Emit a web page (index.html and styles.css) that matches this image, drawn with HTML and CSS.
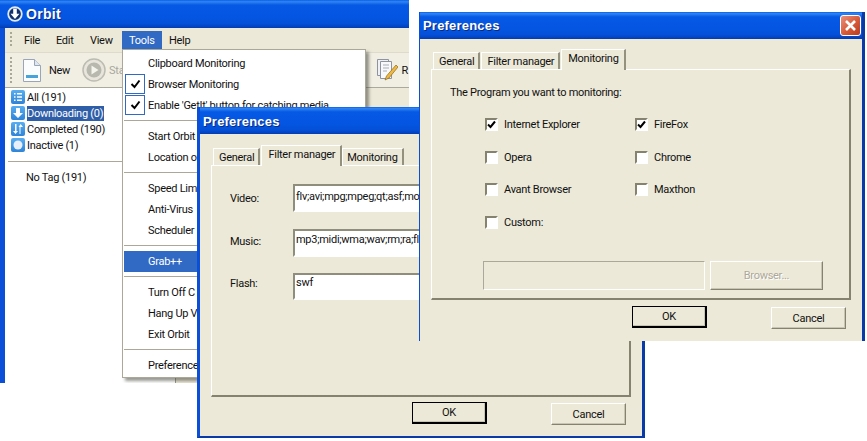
FILE: index.html
```html
<!DOCTYPE html>
<html lang="en">
<head>
<meta charset="utf-8">
<title>Orbit Preferences</title>
<link rel="stylesheet" href="styles.css">
</head>
<body>
<div class="desktop">

  <section class="win main-win">
    <header class="titlebar main-title">
      <svg class="logo" width="16" height="16" viewBox="0 0 16 16"><circle cx="8" cy="8" r="6.800" fill="#12306e" stroke="#dfeaf7" stroke-width="1.800"/><path d="M6.200 2.500h3.600v5.300H12.500L8 13 3.500 7.800h2.700z" fill="#fff"/></svg>
      <span class="title-text">Orbit</span>
    </header>
    <div class="main-body">
      <nav class="menubar">
        <span class="grip"></span>
        <span class="mi mi-file">File</span>
        <span class="mi mi-edit">Edit</span>
        <span class="mi mi-view">View</span>
        <span class="mi mi-active">Tools</span>
        <span class="mi">Help</span>
      </nav>
      <div class="toolbar">
        <span class="grip grip-tall"></span>
        <svg class="tb-new" width="20" height="25" viewBox="0 0 20 25"><path d="M1.500 1.500h11l6 6v16h-17z" fill="#fbfcfe" stroke="#9aa6b8"/><path d="M12.500 1.500v6h6" fill="#dfe6f0" stroke="#9aa6b8"/><rect x="4" y="17" width="12" height="3" fill="#4aa3d8"/></svg>
        <span class="tb-label">New</span>
        <svg class="tb-start" width="24" height="24" viewBox="0 0 24 24"><circle cx="12" cy="12" r="11" fill="#e8e6dc" stroke="#bdbcb2" stroke-width="1.500"/><circle cx="12" cy="12" r="7.500" fill="#b9b8ae"/><path d="M9.500 7.500l7 4.500-7 4.500z" fill="#f4f3ec"/></svg>
        <span class="tb-label tb-off">Start</span>
        <svg class="tb-notes" width="22" height="24" viewBox="0 0 22 24"><path d="M1.500 1.500h11v16h-11z" fill="#eef0f4" stroke="#8d93a0"/><path d="M4.500 3.500h11v17h-11z" fill="#f8f9fb" stroke="#8d93a0"/><path d="M7 7h6M7 10h6M7 13h4" stroke="#a8adb8"/><path d="M20 7l2 2-9 11-4 2 1.500-4z" fill="#f0b840" stroke="#8a6a20" stroke-width=".7"/></svg>
        <span class="tb-label tb-r">R</span>
      </div>
      <div class="panes">
        <aside class="side">
          <ul class="cats">
            <li class="cat"><span class="cat-ico"><svg width="14" height="14" viewBox="0 0 14 14"><path d="M3 3h1.500v1.500H3zM3 6.200h1.500v1.500H3zM3 9.500h1.500V11H3zM6 3h5v1.500H6zM6 6.200h5v1.500H6zM6 9.500h5V11H6z" fill="#fff"/></svg></span><span>All (191)</span></li>
            <li class="cat"><span class="cat-ico"><svg width="14" height="14" viewBox="0 0 14 14"><path d="M5 2h4v5h3l-5 5-5-5h3z" fill="#fff"/></svg></span><span class="cat-sel">Downloading (0)</span></li>
            <li class="cat"><span class="cat-ico"><svg width="14" height="14" viewBox="0 0 14 14"><path d="M4 2v7H2l2.500 3L7 9H5.500V2zM9.500 12V5H12L9.700 2 7.500 5H8.500v7z" fill="#fff"/></svg></span><span>Completed (190)</span></li>
            <li class="cat"><span class="cat-ico"><svg width="14" height="14" viewBox="0 0 14 14"><circle cx="7" cy="7" r="4.500" fill="#e6effa"/></svg></span><span>Inactive (1)</span></li>
          </ul>
          <div class="side-rule"></div>
          <div class="tag">No Tag (191)</div>
        </aside>
        <div class="rest"></div>
      </div>
    </div>

    <div class="menu">
      <div class="row">Clipboard Monitoring</div>
      <div class="row"><span class="tick"><svg width="11" height="10" viewBox="0 0 11 10"><path d="M1.500 5l3 3 5-6.500" fill="none" stroke="#000" stroke-width="2"/></svg></span>Browser Monitoring</div>
      <div class="row"><span class="tick"><svg width="11" height="10" viewBox="0 0 11 10"><path d="M1.500 5l3 3 5-6.500" fill="none" stroke="#000" stroke-width="2"/></svg></span>Enable 'GetIt' button for catching media</div>
      <div class="sep"></div>
      <div class="row">Start Orbit</div>
      <div class="row">Location of</div>
      <div class="sep"></div>
      <div class="row">Speed Limit</div>
      <div class="row">Anti-Virus</div>
      <div class="row">Scheduler</div>
      <div class="sep"></div>
      <div class="row row-hi">Grab++</div>
      <div class="sep"></div>
      <div class="row">Turn Off C</div>
      <div class="row">Hang Up V</div>
      <div class="row">Exit Orbit</div>
      <div class="sep"></div>
      <div class="row">Preferences</div>
    </div>
  </section>

  <section class="win dlg dlg-filter">
    <header class="titlebar dlg-title"><span class="title-text">Preferences</span></header>
    <div class="dlg-body">
      <div class="tabs tabs-filter">
        <span class="tab">General</span>
        <span class="tab tab-on">Filter manager</span>
        <span class="tab">Monitoring</span>
      </div>
      <div class="sheet sheet-filter">
        <div class="frow"><label>Video:</label><div class="field">flv;avi;mpg;mpeg;qt;asf;mo</div></div>
        <div class="frow"><label>Music:</label><div class="field">mp3;midi;wma;wav;rm;ra;fl</div></div>
        <div class="frow"><label>Flash:</label><div class="field">swf</div></div>
      </div>
      <div class="actions actions-filter">
        <span class="btn btn-def">OK</span>
        <span class="btn">Cancel</span>
      </div>
    </div>
  </section>

  <section class="win dlg dlg-mon">
    <header class="titlebar dlg-title">
      <span class="title-text">Preferences</span>
      <span class="close"><svg width="13" height="13" viewBox="0 0 13 13"><path d="M2 2l9 9M11 2l-9 9" stroke="#fff" stroke-width="2.600"/></svg></span>
    </header>
    <div class="dlg-body">
      <div class="tabs tabs-mon">
        <span class="tab">General</span>
        <span class="tab">Filter manager</span>
        <span class="tab tab-on">Monitoring</span>
      </div>
      <div class="sheet sheet-mon">
        <p class="lead">The Program you want to monitoring:</p>
        <div class="checks">
          <div class="chk"><span class="box"><svg width="9" height="9" viewBox="0 0 9 9"><path d="M1 4.500l2.500 2.500L8 1.500" fill="none" stroke="#000" stroke-width="2"/></svg></span>Internet Explorer</div>
          <div class="chk"><span class="box"><svg width="9" height="9" viewBox="0 0 9 9"><path d="M1 4.500l2.500 2.500L8 1.500" fill="none" stroke="#000" stroke-width="2"/></svg></span>FireFox</div>
          <div class="chk"><span class="box"></span>Opera</div>
          <div class="chk"><span class="box"></span>Chrome</div>
          <div class="chk"><span class="box"></span>Avant Browser</div>
          <div class="chk"><span class="box"></span>Maxthon</div>
          <div class="chk"><span class="box"></span>Custom:</div>
        </div>
        <div class="custom">
          <div class="path"></div>
          <span class="btn btn-off">Browser...</span>
        </div>
      </div>
      <div class="actions actions-mon">
        <span class="btn btn-def">OK</span>
        <span class="btn">Cancel</span>
      </div>
    </div>
  </section>

</div>
</body>
</html>
```

FILE: styles.css
```css
* { box-sizing: border-box; }
html, body { margin: 0; padding: 0; background: #fff; }
body { font: 11px/13px Roboto, "Liberation Sans", Arial, sans-serif; letter-spacing: -.28px; color: #111; }
ul { list-style: none; margin: 0; padding: 0; }
p { margin: 0; }

.desktop { position: relative; width: 867px; height: 441px; overflow: hidden; background: #fff; }
.win { position: absolute; display: flex; flex-direction: column; overflow: hidden; }

.titlebar {
  display: flex; align-items: center; flex: none;
  background: linear-gradient(#0a5fe8 0, #2f85f4 6%, #0659e4 18%, #0456e2 60%, #0450d8 85%, #033cb4 100%);
}
.title-text { color: #fff; font: bold 13px/16px "Liberation Sans", Arial, sans-serif; letter-spacing: .2px; text-shadow: 1px 1px 0 #0a2a80; }

/* main window */
.main-win { left: 0; top: 0; width: 409px; height: 383px; background: #0b4fd8; }
.main-title { height: 28px; padding-left: 7px; gap: 3px; }
.main-title .title-text { font-size: 14px; letter-spacing: .3px; }
.logo { flex: none; }
.main-body { flex: 1; margin-left: 5px; display: flex; flex-direction: column; background: #fff; min-height: 0; }
.menubar { height: 24px; flex: none; display: flex; align-items: center; background: #ece9d8; padding-left: 5px; }
.grip { width: 2px; height: 16px; flex: none; background: repeating-linear-gradient(#a9a795 0 2px, transparent 2px 4px); }
.mi { height: 20px; padding: 3px 7px 0; margin-top: 2px; flex: none; }
.mi-file { margin-left: 5px; width: 32px; }
.mi-edit { width: 34px; }
.mi-view { width: 39px; }
.mi-active { background: #316ac5; color: #fff; width: 40px; }
.toolbar { height: 36px; flex: none; display: flex; align-items: center; padding-left: 5px; background: #f1efe4; border-bottom: 1px solid #a9a99c; border-top: 1px solid #dedbcb; }
.grip-tall { height: 26px; }
.tb-new { margin-left: 10px; flex: none; }
.tb-label { margin-left: 7px; }
.tb-start { margin-left: 12px; flex: none; }
.tb-off { color: #a8a79c; margin-left: 3px; }
.tb-notes { margin-left: 245px; flex: none; }
.tb-r { margin-left: 3px; }
.panes { flex: 1; display: flex; min-height: 0; }
.side { width: 170px; flex: none; background: #fff; padding-top: 1px; }
.cat { display: flex; align-items: center; height: 16px; padding-left: 6px; gap: 2px; }
.cat-ico { width: 14px; height: 14px; flex: none; display: block; background: linear-gradient(#58aef0, #2e84d8); border-radius: 2px; }
.cat-ico svg { display: block; }
.cat-sel { background: #2f5ea8; color: #fff; padding: 1px 1px 1px 0; }
.side-rule { height: 1px; background: #aca899; margin: 8px 0 0 3px; }
.tag { margin: 9px 0 0 21px; }
.rest { flex: 1; background: #ece9d8; border-left: 1px solid #9a9888; }

.menu {
  position: absolute; left: 122px; top: 49px; width: 244px; height: 329px;
  background: #fff; border: 1px solid #aca899; padding: 3px 1px 0;
  box-shadow: 3px 3px 3px rgba(70,70,60,.55);
}
.row { position: relative; height: 21px; line-height: 21px; padding-left: 24px; }
.row-hi { background: #316ac5; color: #fff; }
.tick { position: absolute; left: 1px; top: 0; width: 20px; height: 20px; border: 1px solid #316ac5; display: flex; align-items: center; justify-content: center; background: #fff; }
.sep { height: 1px; background: #aca899; margin: 4px 0 5px; }

/* dialogs */
.dlg { background: #ece9d8; border-left: 3px solid #0b4fd8; }
.dlg-filter { left: 197px; top: 107px; width: 448px; height: 331px; border-right: 3px solid #0a3aa8; border-bottom: 2px solid #0a3aa8; }
.dlg-mon { left: 419px; top: 12px; width: 446px; height: 329px; border-left-width: 1px; border-right: 3px solid #0a3aa8; }
.dlg-title { height: 27px; padding-left: 3px; justify-content: space-between; }
.dlg-filter .dlg-title { padding-top: 3px; }
.dlg-body { flex: 1; position: relative; display: flex; flex-direction: column; background: #ece9d8; padding: 11px 11px 0; }
.dlg-mon .dlg-body { padding-top: 10px; }
.close { width: 21px; height: 21px; margin-right: 1px; display: flex; align-items: center; justify-content: center; border: 1px solid #fff; border-radius: 3px; background: linear-gradient(135deg, #e8907c, #d65a38 55%, #b83c1e); }
.close svg { display: block; }

.tabs { display: flex; align-items: flex-end; height: 20px; flex: none; padding-left: 2px; position: relative; z-index: 1; }
.tab { height: 17px; padding: 2px 4px 0 5px; margin-right: 1px; background: #ece9d8; border-top: 1px solid #fff; border-left: 1px solid #fff; border-right: 2px solid #94917f; white-space: nowrap; }
.tab-on { height: 21px; padding-top: 2px; padding-left: 6px; padding-right: 5px; margin-right: 0; margin-bottom: -1px; }
.tab-on + .tab { padding-left: 4px; }
.sheet { background: #ece9d8; border-top: 1px solid #fff; border-left: 1px solid #fff; border-right: 2px solid #85836f; border-bottom: 2px solid #85836f; }
.sheet-filter { width: 420px; height: 232px; padding-top: 18px; overflow: hidden; }
.frow { display: flex; align-items: center; height: 28px; margin-bottom: 17px; padding-left: 18px; }
.frow:nth-child(2) { margin-bottom: 16px; }
.frow:nth-child(2) label { margin-bottom: 4px; }
.frow:nth-child(3) { height: 27px; }
.frow:nth-child(3) label { margin-bottom: 6px; }
.frow label { width: 63px; flex: none; }
.field { width: 340px; flex: none; height: 100%; padding: 4px 1px; background: #fff; border: 2px solid; border-color: #8f8d7c #fff #fff #8f8d7c; white-space: nowrap; overflow: hidden; }
.frow:nth-child(2) .field { padding-top: 2px; }
.frow:nth-child(3) .field { padding-top: 1px; }
.actions { position: absolute; display: flex; }
.actions-filter { left: 212px; top: 268px; gap: 64px; }
.actions-mon { left: 212px; top: 267px; gap: 64px; }
.btn { width: 75px; height: 22px; display: flex; align-items: center; justify-content: center; background: #ece9d8; border: 1px solid; border-color: #fff #85836f #85836f #fff; box-shadow: inset -1px -1px 0 #c8c5b4; }
.btn-def { border: 1px solid #000; border-right-width: 2px; border-bottom-width: 2px; }
.btn-def + .btn { margin-top: 1px; }

.sheet-mon { width: 420px; height: 231px; padding: 16px 0 0 18px; position: relative; }
.lead { line-height: 14px; }
.checks { display: grid; grid-template-columns: 150px 1fr; row-gap: 19.67px; margin: 18px 0 0 35px; grid-auto-rows: 13px; }
.chk { display: flex; align-items: center; gap: 6px; white-space: nowrap; }
.box { width: 13px; height: 13px; flex: none; display: flex; align-items: center; justify-content: center; background: #fff; border: 2px solid; border-color: #85836f #fff #fff #85836f; }
.box svg { display: block; flex: none; }
.custom { display: flex; gap: 5px; margin: 32px 0 0 33px; }
.path { width: 222px; height: 29px; border: 1px solid; border-color: #aca899 #fff #fff #aca899; }
.btn-off { width: 113px; height: 29px; color: #aca899; text-shadow: 1px 1px 0 #fff; }
```
